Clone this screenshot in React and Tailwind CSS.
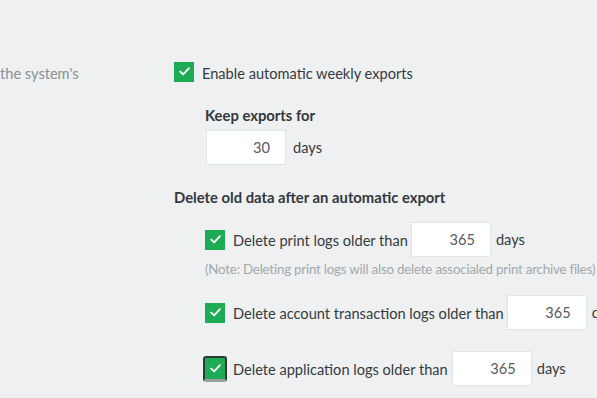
import React from "react";

function Check({ focus }) {
  return (
    <span
      className={
        "flex items-center justify-center shrink-0 bg-[#1dab55] " +
        (focus
          ? "w-6 h-[26px] rounded-[3px] border-2 border-[#2f3a34] border-b-[3px] border-b-[#9aa09c]"
          : "w-5 h-5")
      }
    >
      <svg width="11" height="9" viewBox="0 0 11 9" fill="none">
        <path d="M1.2 4.6 L4.1 7.3 L9.8 1.3" stroke="white" strokeWidth="1.9" strokeLinecap="round" strokeLinejoin="round" />
      </svg>
    </span>
  );
}

function NumBox({ value }) {
  return (
    <div className="w-20 h-[35px] bg-white border border-[#e2e5e8] flex items-center justify-end pr-[15px] text-[#555b61] text-[14.6px] shrink-0">
      {value}
    </div>
  );
}

export default function App() {
  return (
    <div
      className="w-[597px] h-[398px] overflow-hidden bg-[#eef0f1] text-[#363b40] text-[14.6px] whitespace-nowrap"
      style={{ fontFamily: "Lato, 'Liberation Sans', sans-serif" }}
    >
      <div className="flex pt-[59px]">
        <div className="w-[174px] shrink-0 pt-[4px] text-[#8a9096]">the system's</div>
        <div className="flex flex-col">
          <div className="flex items-center gap-2">
            <Check />
            <span className="pt-[4px]">Enable automatic weekly exports</span>
          </div>
          <div className="pl-[31px] mt-[19px] font-bold text-[14.8px] text-[#33383d]">Keep exports for</div>
          <div className="pl-[32px] mt-[4px] flex items-center gap-[7px]">
            <NumBox value="30" />
            <span>days</span>
          </div>
          <div className="mt-[21px] font-bold text-[14.8px] text-[#33383d]">Delete old data after an automatic export</div>
          <div className="pl-[31px] mt-[14px] flex items-center">
            <Check />
            <span className="ml-2 mr-[3px] pt-[3px]">Delete print logs older than</span>
            <NumBox value="365" />
            <span className="ml-[5px]">days</span>
          </div>
          <div className="pl-[31px] mt-[3px] text-[13.3px] text-[#a3a8ad] tracking-[-0.2px]">
            (Note: Deleting print logs will also delete associaled print archive files)
          </div>
          <div className="pl-[31px] mt-[15px] flex items-center">
            <Check />
            <span className="ml-2 mr-[3px] pt-[3px]">Delete account transaction logs older than</span>
            <NumBox value="365" />
            <span className="ml-[5px]">days</span>
          </div>
          <div className="pl-[29px] mt-[21px] flex items-center">
            <Check focus />
            <span className="ml-[6px] mr-[4px] pt-[3px]">Delete application logs older than</span>
            <NumBox value="365" />
            <span className="ml-[5px]">days</span>
          </div>
        </div>
      </div>
    </div>
  );
}
